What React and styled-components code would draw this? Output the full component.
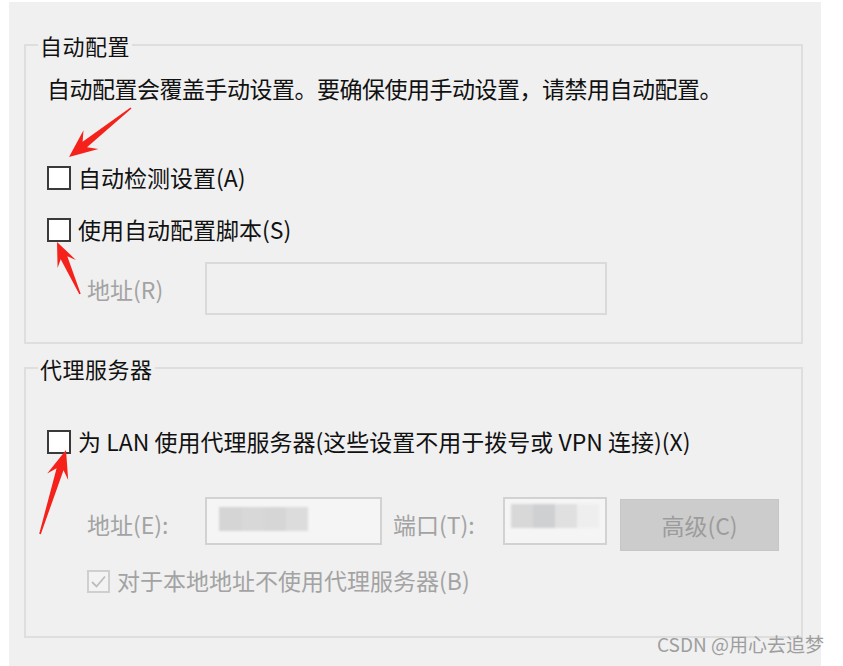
import styled, { createGlobalStyle } from 'styled-components';

const GlobalStyle = createGlobalStyle`
  body {
    margin: 0;
    background: #ffffff;
    font-family: "Noto Sans CJK SC", "Noto Sans", sans-serif;
  }
`;

const Page = styled.div`
  position: relative;
  width: 843px;
  height: 666px;
  padding-top: 2px;
  box-sizing: border-box;
  overflow: hidden;
`;

const Panel = styled.div`
  margin-left: 9px;
  width: 812px;
  height: 664px;
  box-sizing: border-box;
  padding: 30px 18px 0 15px;
  background: #f0f0f0;
  display: flex;
  flex-direction: column;
  gap: 11px;
`;

const GroupBox = styled.fieldset`
  margin: 0;
  padding: 0;
  min-width: 0;
  border: 2px solid #dedede;
`;

const GroupTitle = styled.legend`
  margin-left: 12px;
  padding: 0 2px;
  font-size: 22px;
  line-height: 26px;
  letter-spacing: 0.5px;
  color: #111111;
`;

const GroupBody = styled.div`
  display: flex;
  flex-direction: column;
  padding: 0 20px ${(p) => p.$bottom}px 0;
`;

const Note = styled.div`
  margin: 15px 0 0 21px;
  font-size: 23px;
  line-height: 30px;
  letter-spacing: -0.5px;
  color: #111111;
  white-space: nowrap;
`;

const CheckRow = styled.label`
  display: flex;
  align-items: center;
  gap: 7px;
  height: 30px;
  margin-top: ${(p) => p.$top}px;
  padding-left: ${(p) => p.$indent}px;
  font-size: 23px;
  color: ${(p) => (p.$disabled ? '#a3a3a3' : '#111111')};
  white-space: nowrap;
`;

const LabelText = styled.span`
  position: relative;
  top: -1px;
`;

const Box = styled.span`
  width: ${(p) => (p.$disabled ? 23 : 24)}px;
  height: ${(p) => (p.$disabled ? 23 : 24)}px;
  box-sizing: border-box;
  border: 2px solid ${(p) => (p.$disabled ? '#cfcfcf' : '#3a3a3a')};
  background: ${(p) => (p.$disabled ? '#f3f3f3' : '#ffffff')};
  display: flex;
  align-items: center;
  justify-content: center;
  flex-shrink: 0;
`;

const FieldRow = styled.div`
  display: flex;
  align-items: ${(p) => p.$align || 'center'};
  margin-top: ${(p) => p.$top}px;
  padding-left: 61px;
`;

const FieldLabel = styled.span`
  width: ${(p) => p.$w}px;
  margin-left: ${(p) => p.$gap || 0}px;
  align-self: center;
  font-size: 23px;
  color: #a3a3a3;
  white-space: nowrap;
  flex-shrink: 0;
`;

const TextBox = styled.div`
  width: ${(p) => p.$w}px;
  height: ${(p) => p.$h}px;
  box-sizing: border-box;
  border: 2px solid ${(p) => (p.$light ? '#dadada' : '#d2d2d2')};
  background: ${(p) => (p.$light ? '#f0f0f0' : '#f5f5f5')};
  display: flex;
  align-items: flex-start;
  padding: ${(p) => p.$pad || '0'};
  flex-shrink: 0;
`;

const Mosaic = styled.div`
  display: flex;
  filter: blur(1.2px);
`;

const Cell = styled.span`
  width: ${(p) => p.$w}px;
  height: 24px;
  background: ${(p) => p.$c};
`;

const Button = styled.div`
  width: 159px;
  height: 52px;
  margin: 2px 0 0 13px;
  box-sizing: border-box;
  border: 1px solid #c6c6c6;
  background: #cccccc;
  color: #9c9c9c;
  font-size: 23px;
  display: flex;
  align-items: center;
  justify-content: center;
  flex-shrink: 0;
`;

const Watermark = styled.div`
  position: absolute;
  left: 657px;
  top: 631px;
  font-family: "Noto Sans CJK SC", "Liberation Sans", sans-serif;
  font-size: 19px;
  line-height: 26px;
  color: #9e9e9e;
  white-space: nowrap;
`;

const Overlay = styled.svg`
  position: absolute;
  left: 0;
  top: 0;
  pointer-events: none;
`;

function arrowPoints(tail, tip, hl, hw) {
  const dx = tip[0] - tail[0];
  const dy = tip[1] - tail[1];
  const len = Math.hypot(dx, dy);
  const ux = dx / len;
  const uy = dy / len;
  const nx = -uy;
  const ny = ux;
  const at = (d, w) => [tip[0] - ux * d + nx * w, tip[1] - uy * d + ny * w];
  const pts = [
    [tail[0] + nx * 0.8, tail[1] + ny * 0.8],
    at(hl * 0.72, 3.6),
    at(hl, hw),
    tip,
    at(hl, -hw),
    at(hl * 0.72, -3.6),
    [tail[0] - nx * 0.8, tail[1] - ny * 0.8],
  ];
  return pts.map((p) => p.map((v) => v.toFixed(1)).join(',')).join(' ');
}

const arrows = [
  { tail: [131, 108], tip: [69, 157], hl: 28, hw: 12 },
  { tail: [80, 294], tip: [57, 242], hl: 24, hw: 10 },
  { tail: [40, 534], tip: [66, 450], hl: 28, hw: 11 },
];

function Checkbox({ checked, disabled }) {
  return (
    <Box $disabled={disabled}>
      {checked && (
        <svg width="17" height="17" viewBox="0 0 17 17">
          <polyline
            points="2,9 6.5,13.5 15,3.5"
            fill="none"
            stroke="#bdbdbd"
            strokeWidth="1.8"
          />
        </svg>
      )}
    </Box>
  );
}

function App() {
  return (
    <Page>
      <GlobalStyle />
      <Panel>
        <GroupBox>
          <GroupTitle>自动配置</GroupTitle>
          <GroupBody $bottom={27}>
            <Note>自动配置会覆盖手动设置。要确保使用手动设置，请禁用自动配置。</Note>
            <CheckRow $top={60} $indent={21}>
              <Checkbox />
              <LabelText>自动检测设置(A)</LabelText>
            </CheckRow>
            <CheckRow $top={22} $indent={21}>
              <Checkbox />
              <LabelText>使用自动配置脚本(S)</LabelText>
            </CheckRow>
            <FieldRow $top={17}>
              <FieldLabel $w={118}>地址(R)</FieldLabel>
              <TextBox $w={402} $h={53} $light />
            </FieldRow>
          </GroupBody>
        </GroupBox>

        <GroupBox>
          <GroupTitle>代理服务器</GroupTitle>
          <GroupBody $bottom={40}>
            <CheckRow $top={46} $indent={21}>
              <Checkbox />
              <LabelText>为 LAN 使用代理服务器(这些设置不用于拨号或 VPN 连接)(X)</LabelText>
            </CheckRow>
            <FieldRow $top={40} $align="flex-start">
              <FieldLabel $w={118}>地址(E):</FieldLabel>
              <TextBox $w={177} $h={48} $pad="8px 0 0 12px">
                <Mosaic>
                  <Cell $w={23} $c="#d5d5d5" />
                  <Cell $w={22} $c="#d8d8d8" />
                  <Cell $w={22} $c="#d6d6d6" />
                  <Cell $w={22} $c="#dcdcdc" />
                </Mosaic>
              </TextBox>
              <FieldLabel $w={110} $gap={11}>端口(T):</FieldLabel>
              <TextBox $w={104} $h={48} $pad="5px 0 0 6px">
                <Mosaic>
                  <Cell $w={22} $c="#d8d8d8" />
                  <Cell $w={22} $c="#cfd0d2" />
                  <Cell $w={22} $c="#e0e0e0" />
                  <Cell $w={22} $c="#eeeeee" />
                </Mosaic>
              </TextBox>
              <Button>高级(C)</Button>
            </FieldRow>
            <CheckRow $top={15} $indent={61} $disabled>
              <Checkbox checked disabled />
              <LabelText>对于本地地址不使用代理服务器(B)</LabelText>
            </CheckRow>
          </GroupBody>
        </GroupBox>
      </Panel>

      <Watermark>CSDN @用心去追梦</Watermark>

      <Overlay width="843" height="666" viewBox="0 0 843 666">
        {arrows.map((a, i) => (
          <polygon key={i} points={arrowPoints(a.tail, a.tip, a.hl, a.hw)} fill="#f5221b" />
        ))}
      </Overlay>
    </Page>
  );
}

export default App;
